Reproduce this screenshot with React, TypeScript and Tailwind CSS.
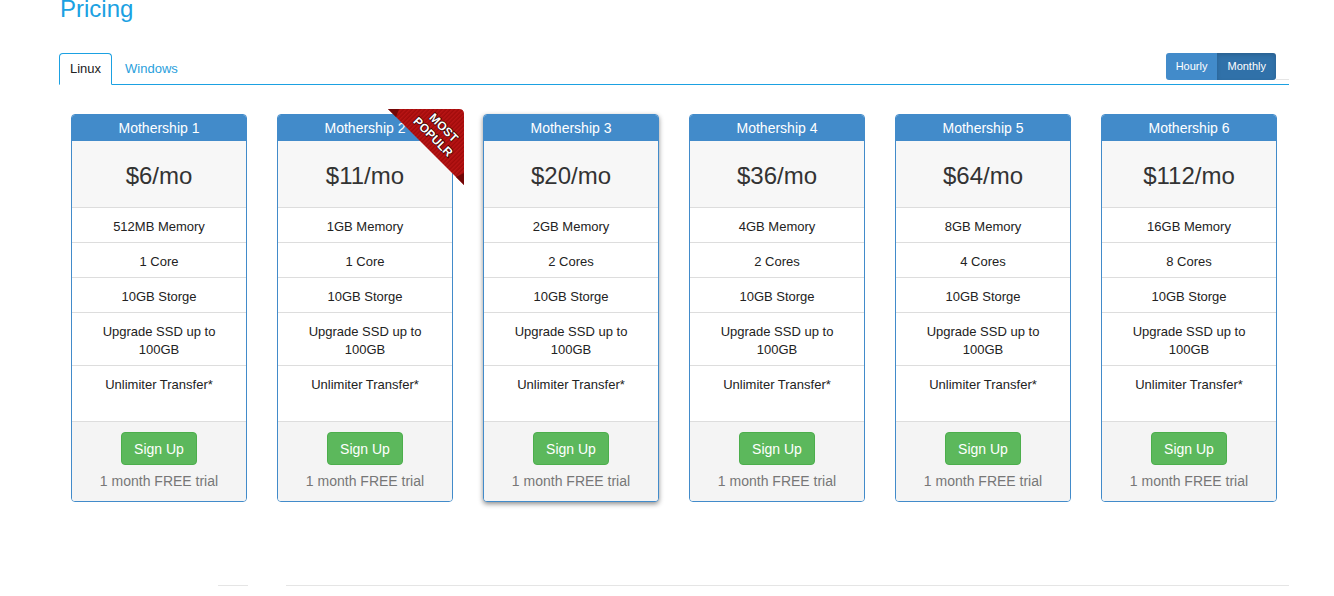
import React from "react";

type Plan = {
  name: string;
  price: string;
  mem: string;
  cores: string;
  featured?: boolean;
  ribbon?: boolean;
};

const plans: Plan[] = [
  { name: "Mothership 1", price: "$6/mo", mem: "512MB Memory", cores: "1 Core" },
  { name: "Mothership 2", price: "$11/mo", mem: "1GB Memory", cores: "1 Core", ribbon: true },
  { name: "Mothership 3", price: "$20/mo", mem: "2GB Memory", cores: "2 Cores", featured: true },
  { name: "Mothership 4", price: "$36/mo", mem: "4GB Memory", cores: "2 Cores" },
  { name: "Mothership 5", price: "$64/mo", mem: "8GB Memory", cores: "4 Cores" },
  { name: "Mothership 6", price: "$112/mo", mem: "16GB Memory", cores: "8 Cores" },
];

function Ribbon() {
  return (
    <svg
      className="absolute top-[-6px] right-[-12px]"
      width="76"
      height="76"
      viewBox="0 0 76 76"
    >
      <defs>
        <pattern id="stripes" width="3" height="3" patternUnits="userSpaceOnUse" patternTransform="rotate(45)">
          <rect width="3" height="3" fill="#a00b0b" />
          <rect width="1.5" height="3" fill="#b91515" />
        </pattern>
      </defs>
      <path d="M0,0 H71 Q76,0 76,5 V76 Z" fill="url(#stripes)" />
      <path d="M0,0 L8,8 L11,0 Z" fill="#720606" />
      <path d="M76,64 L68,68 L76,76 Z" fill="#720606" />
      <text
        transform="translate(50,23) rotate(45)"
        textAnchor="middle"
        fill="#ffffff"
        stroke="#2a0000"
        strokeWidth="1.3"
        paintOrder="stroke"
        fontFamily="'Liberation Sans', Arial, sans-serif"
        fontWeight="700"
        fontSize="12"
      >
        <tspan x="1" y="-3">MOST</tspan>
        <tspan x="0" y="11">POPULR</tspan>
      </text>
    </svg>
  );
}

function Card({ plan }: { plan: Plan }) {
  return (
    <div
      className={
        plan.featured
          ? "relative w-[176px] border border-[#428bca] rounded-[4px] bg-white shadow-[0_2px_5px_rgba(0,0,0,0.45)]"
          : "relative w-[176px] border border-[#428bca] rounded-[4px] bg-white"
      }
    >
      <div className="h-[26px] bg-[#428bca] rounded-t-[3px] text-center text-[14px] leading-[26px] text-white">
        {plan.name}
      </div>
      <div className="h-[67px] bg-[#f7f7f7] border-b border-[#dddddd] pt-[4px] text-center text-[24px] leading-[62px] text-[#333333]">
        {plan.price}
      </div>
      <div className="h-[35px] border-b border-[#dddddd] pt-[10px] text-center text-[13px] leading-[18px] text-[#222222]">
        {plan.mem}
      </div>
      <div className="h-[35px] border-b border-[#dddddd] pt-[10px] text-center text-[13px] leading-[18px] text-[#222222]">
        {plan.cores}
      </div>
      <div className="h-[35px] border-b border-[#dddddd] pt-[10px] text-center text-[13px] leading-[18px] text-[#222222]">
        10GB Storge
      </div>
      <div className="h-[53px] border-b border-[#dddddd] pt-[10px] text-center text-[13px] leading-[18px] text-[#222222]">
        Upgrade SSD up to
        <br />
        100GB
      </div>
      <div className="h-[55px] pt-[10px] text-center text-[13px] leading-[18px] text-[#222222]">
        Unlimiter Transfer*
      </div>
      <div className="h-[80px] bg-[#f4f4f4] border-t border-[#dddddd] rounded-b-[3px] pt-[10px] flex flex-col items-center">
        <button className="h-[33px] px-[12px] rounded-[4px] bg-[#5cb85c] border border-[#4cae4c] text-white text-[14px] leading-[20px]">
          Sign Up
        </button>
        <div className="mt-[6px] text-[14px] leading-[20px] text-[#777777]">1 month FREE trial</div>
      </div>
      {plan.ribbon ? <Ribbon /> : null}
    </div>
  );
}

export default function App() {
  return (
    <div className="w-[1334px] h-[596px] overflow-hidden bg-white font-['Liberation_Sans',Arial,sans-serif]">
      <div className="ml-[59px] w-[1230px]">
        <h1 className="mt-[-4px] pl-[1px] h-[26px] text-[24px] leading-[26px] font-normal text-[#1ba1e2]">
          Pricing
        </h1>
        <div className="mt-[31px] h-[32px] flex items-start border-b border-[#1ba1e2]">
          <div className="h-[32px] -mb-[1px] px-[10px] border border-[#1ba1e2] border-b-white rounded-t-[4px] bg-white text-[13px] leading-[30px] text-[#222222]">
            Linux
          </div>
          <div className="ml-[2px] h-[32px] px-[10px] border border-transparent text-[13px] leading-[30px] text-[#2aa0dc]">
            Windows
          </div>
          <div className="ml-auto flex h-[27px]">
            <div className="h-[27px] px-[10px] rounded-l-[3px] bg-[#428bca] text-white text-[11px] leading-[27px]">
              Hourly
            </div>
            <div className="h-[27px] px-[10px] rounded-r-[3px] bg-[#3071a9] shadow-[inset_0_2px_4px_rgba(0,0,0,0.15)] text-white text-[11px] leading-[27px]">
              Monthly
            </div>
          </div>
          <div className="w-[13px] h-[27px] border-b border-[#e5e5e5]" />
        </div>
        <div className="mt-[29px] px-[12px] flex gap-[30px]">
          {plans.map((p) => (
            <Card key={p.name} plan={p} />
          ))}
        </div>
        <div className="mt-[83px] flex">
          <div className="ml-[159px] w-[30px] border-t border-[#e5e5e5]" />
          <div className="ml-[38px] flex-1 border-t border-[#e5e5e5]" />
        </div>
      </div>
    </div>
  );
}
